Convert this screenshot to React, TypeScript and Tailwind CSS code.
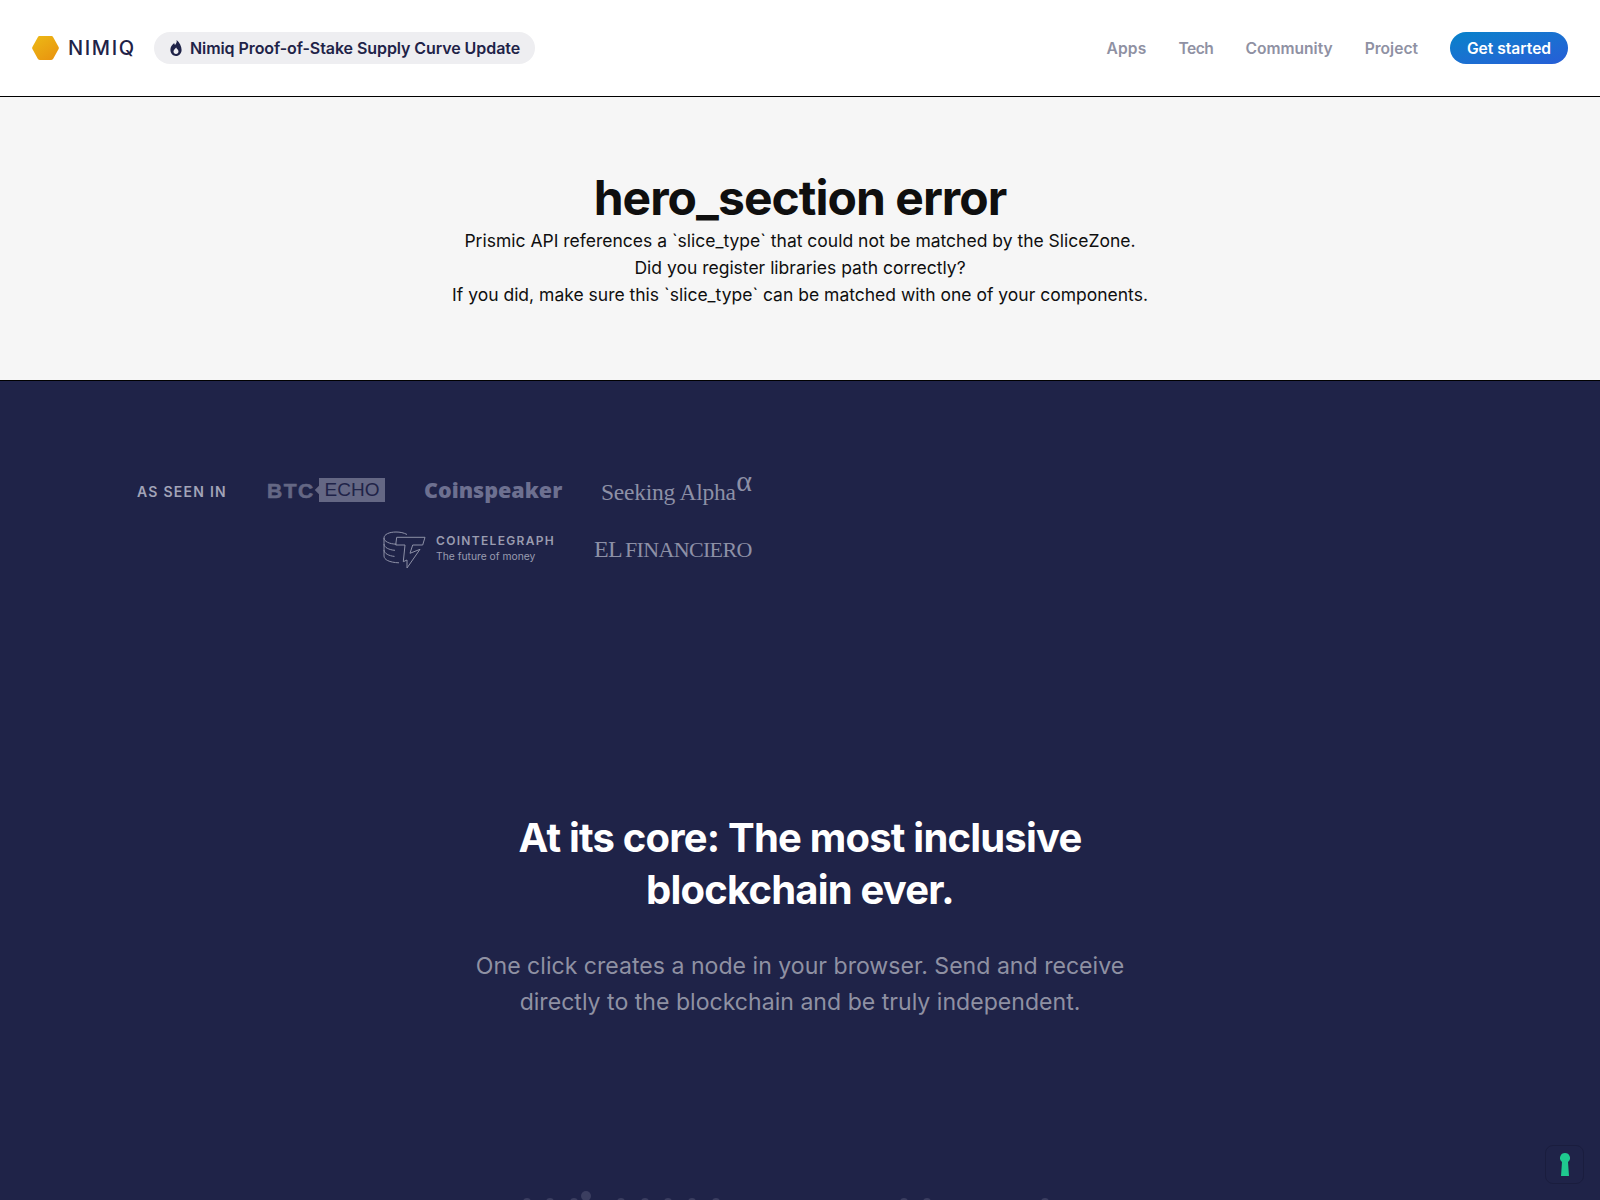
const sans = "font-['Inter',sans-serif]";

function Hex() {
  return (
    <svg width="27" height="24" viewBox="0 0 27 24" className="shrink-0">
      <defs>
        <linearGradient id="hexg" x1="0.15" y1="0" x2="0.85" y2="1">
          <stop offset="0" stopColor="#ecb715" />
          <stop offset="1" stopColor="#e9940f" />
        </linearGradient>
      </defs>
      <path d="M26.6 11 21.2 1.2C20.8.5 20.1 0 19.3 0H7.700C6.900 0 6.200.5 5.800 1.200L.4 11c-.4.6-.4 1.400 0 2l5.400 9.800c.4.7 1.100 1.200 1.900 1.200h11.600c.8 0 1.500-.5 1.900-1.200L26.600 13c.4-.6.4-1.400 0-2Z" fill="url(#hexg)" />
    </svg>
  );
}

function Flame() {
  return (
    <svg width="12" height="16" viewBox="0 0 12 16" className="shrink-0">
      <path fillRule="evenodd" fill="#1f2348" d="M6.600 0c.5 2.400-.4 3.600-1.600 5C4.500 4.400 4.300 3.800 4.200 3 2 4.700.4 7 .4 9.800.4 13.300 2.900 16 6 16s5.600-2.700 5.600-6C11.600 6.200 9.500 2.200 6.600 0ZM6 14c-1.400 0-2.500-1.100-2.500-2.500C3.500 9.800 5 8.800 6.200 7.400c.3 1.200 2.300 2.300 2.300 4.100C8.500 12.900 7.400 14 6 14Z" />
    </svg>
  );
}

function CoinIcon() {
  return (
    <svg width="43" height="40" viewBox="0 0 43 40" fill="none" stroke="#8d90a6" strokeWidth="1" className="shrink-0 translate-y-[2px]">
      <path d="M24 3.500C21 1.800 17 1 13 1 6 1 1 3.500 1 7v18c0 3.500 5 6.500 15 6.800" />
      <path d="M1 7c0 3.300 5 6 12.500 6.200M1 13c0 3.300 5 6 11 6.300M1 19c0 3.300 5 6 10.500 6.400" />
      <path d="M13.700 6.300H42l-2.300 7.700H29.700L27 22.300l10-4L24 37v-8l-3.700 1.700L22 14h-9.300l1-7.700Z" strokeLinejoin="miter" />
    </svg>
  );
}

function Logos() {
  return (
    <div className="ml-[132px] flex w-[620px] flex-wrap items-center justify-end gap-x-[39px] gap-y-[20px] text-[#6d7090]">
      <span className={`${sans} w-[91px] translate-y-[1px] whitespace-nowrap text-[14px] font-semibold tracking-[0.09em] text-[#a2a4b8]`}>AS SEEN IN</span>
      <div className="relative flex h-[24px] w-[118px] items-center font-['Liberation_Sans',sans-serif]">
        <span className="w-[52px] translate-y-[1px] text-[21px] font-bold tracking-[0.07em] text-[#646784] [-webkit-text-stroke:0.6px_#646784]">BTC</span>
        <span className="absolute left-[49px] top-[9px] size-[6px] rotate-45 bg-[#646784]" />
        <span className="absolute left-[52px] flex h-[24px] w-[66px] items-center justify-center bg-[#646784] text-[19px] text-[#1f2348]">ECHO</span>
      </div>
      <span className="w-[138px] whitespace-nowrap font-['Open_Sans',sans-serif] text-[21.5px] font-extrabold leading-[24px] text-[#6d7090]">Coinspeaker</span>
      <div className="relative h-[38px] w-[151px] font-['Liberation_Serif',serif] text-[#8d90a6]">
        <span className="absolute bottom-[2px] left-0 whitespace-nowrap text-[23.5px] leading-[30px] tracking-[-0.01em]">Seeking Alpha</span>
        <span className="absolute right-0 top-[-5px] text-[30px] leading-[30px]">α</span>
      </div>
      <div className="flex w-[172px] items-center gap-[10px]">
        <CoinIcon />
        <div className={`${sans} -translate-y-[1px] whitespace-nowrap`}>
          <div className="text-[12px] font-semibold leading-[16px] tracking-[0.11em] text-[#9a9cb0]">COINTELEGRAPH</div>
          <div className="text-[10.3px] leading-[15px] text-[#9a9cb0]">The future of money</div>
        </div>
      </div>
      <div className="flex w-[158px] items-baseline gap-[3px] whitespace-nowrap font-['Liberation_Serif',serif] text-[22px] leading-[24px] tracking-[-0.03em] text-[#8d90a6]">
        <span className="text-[24px]">EL</span>
        <span>FINANCIERO</span>
      </div>
    </div>
  );
}

export default function App() {
  return (
    <div className={`${sans} relative h-[1200px] overflow-hidden bg-[#1f2348]`}>
      <header className="flex h-[97px] items-center justify-between border-b border-black bg-white pl-[32px] pr-[32px]">
        <div className="flex items-center">
          <Hex />
          <span className="ml-[9px] w-[68px] whitespace-nowrap text-[20px] font-medium leading-none tracking-[0.08em] text-[#1f2348]">NIMIQ</span>
          <div className="ml-[18px] flex h-[32px] w-[381px] items-center gap-[8px] rounded-full bg-[#eeeef1] pl-[16px]">
            <Flame />
            <span className="whitespace-nowrap text-[16px] font-semibold tracking-[-0.005em] text-[#1f2348]">Nimiq Proof-of-Stake Supply Curve Update</span>
          </div>
        </div>
        <nav className="flex items-center">
          <div className="flex translate-y-[1px] items-center gap-[32px] text-[15.6px] font-semibold text-[#8f91a3]">
            <a className="tracking-[0.01em]">Apps</a>
            <a className="tracking-[-0.03em]">Tech</a>
            <a>Community</a>
            <a>Project</a>
          </div>
          <a className="ml-[32px] flex h-[32px] w-[118px] items-center justify-center rounded-full bg-gradient-to-br from-[#0582ca] to-[#265dd7] text-[15.6px] font-semibold text-white"><span className="translate-y-[1px]">Get started</span></a>
        </nav>
      </header>

      <section className="flex h-[284px] flex-col items-center border-b border-black bg-[#f6f6f6] pt-[72px] text-center text-[#0f0f0f]">
        <h1 className="text-[48px] font-bold leading-[58px] tracking-[-0.02em]">hero_section error</h1>
        <p className="text-[17.5px] leading-[27px]">Prismic API references a `slice_type` that could not be matched by the SliceZone.</p>
        <p className="text-[17.5px] leading-[27px]">Did you register libraries path correctly?</p>
        <p className="text-[17.5px] leading-[27px]">If you did, make sure this `slice_type` can be matched with one of your components.</p>
      </section>

      <section className="pt-[90px]">
        <Logos />
        <div className="mt-[243px] flex flex-col items-center text-center">
          <h2 className="w-[640px] text-[40px] font-bold leading-[52px] tracking-[-0.02em] text-white">At its core: The most inclusive blockchain ever.</h2>
          <p className="mt-[32px] w-[680px] text-[23.1px] leading-[36px] text-[#8f91a3]">One click creates a node in your browser. Send and receive directly to the blockchain and be truly independent.</p>
        </div>
      </section>

      {[527, 550, 574, 621, 645, 668, 692, 716, 904, 927, 1045].map((x) => (
        <span key={x} className="absolute top-[1198px] size-[8px] rounded-full bg-[#3b3e60]" style={{ left: x - 4 }} />
      ))}
      <span className="absolute left-[581px] top-[1191px] size-[10px] rounded-full bg-[#3b3e60]" />

      <div className="absolute left-[1545px] top-[1145px] flex size-[39px] items-center justify-center rounded-[8px] border border-[#1a1d3e]">
        <svg width="10" height="23" viewBox="0 0 10 23"><path d="M5 0a5 5 0 0 1 3 9l1 14H1L2 9a5 5 0 0 1 3-9Z" fill="#1fc98f" /></svg>
      </div>
    </div>
  );
}
